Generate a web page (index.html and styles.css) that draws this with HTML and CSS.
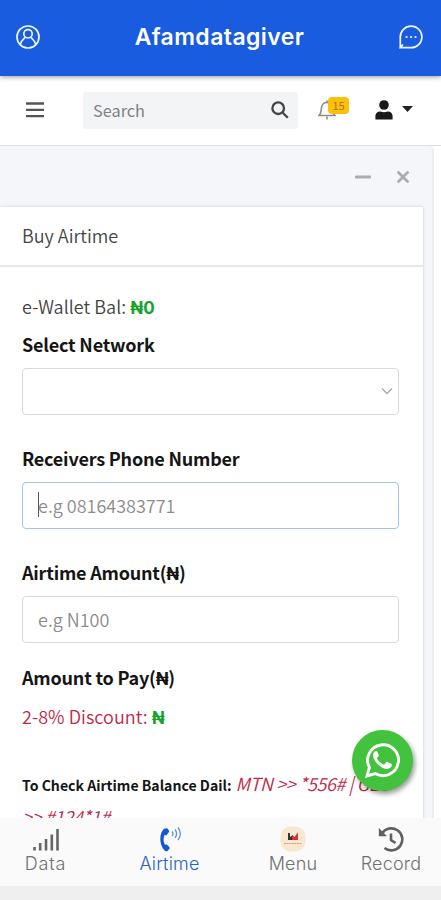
FILE: index.html
```html
<!DOCTYPE html>
<html lang="en">
<head>
<meta charset="utf-8">
<title>Afamdatagiver</title>
<link rel="stylesheet" href="styles.css">
</head>
<body>
<header class="appbar">
  <svg class="appbar-icon" viewBox="0 0 24 24"><circle cx="12" cy="12" r="11"/><circle cx="12" cy="8.8" r="4.2"/><path d="M4.5 19.5C5 15.6 7.6 14 9.2 12.5M14.8 12.5c1.6 1.5 4.2 3.1 4.700 7"/></svg>
  <h1 class="brand">Afamdatagiver</h1>
  <svg class="appbar-icon" viewBox="0 0 24 24"><path d="M1.300 22.700V12A10.800 10.800 0 1 1 12 22.700H1.300l2.600-3.200"/><path class="dots" d="M7.500 12h.1M12 12h.1M16.500 12h.1"/></svg>
</header>
<nav class="toolbar">
  <svg class="burger" viewBox="0 0 18 16"><path d="M0 1.500h18M0 7.800h18M0 14.200h18"/></svg>
  <div class="search"><span class="search-text">Search</span>
    <svg class="search-icon" viewBox="0 0 18 18"><circle cx="7.200" cy="7.200" r="5.800"/><path d="M11.500 11.500l5.300 5.300"/></svg>
  </div>
  <div class="bell">
    <svg viewBox="0 0 18 20"><path d="M1 15.500c2.500-2.300 2-5 2.500-8C4 4.500 6 2.500 9 2.500s5 2 5.500 5c.5 3 0 5.700 2.500 8z"/><path d="M9 .5v2M9 16.500v3"/></svg>
    <span class="count">15</span>
  </div>
  <svg class="user" viewBox="0 0 18 20"><circle cx="9" cy="5" r="4.800"/><path d="M.4 19.500v-3.300c0-3 2-4.700 4.800-4.700 2.600 1 5 1 7.600 0 2.800 0 4.800 1.700 4.800 4.700v3.300z"/></svg>
  <svg class="caret" viewBox="0 0 11 6"><path d="M0 0h11L5.500 6z"/></svg>
</nav>
<main class="page">
  <section class="panel">
    <div class="tools">
      <svg class="minus" viewBox="0 0 16 4"><path d="M1 2h14"/></svg>
      <svg class="close" viewBox="0 0 12 12"><path d="M1.500 1.500l9 9M10.500 1.500l-9 9"/></svg>
    </div>
    <div class="card">
      <h2 class="card-title">Buy Airtime</h2>
      <form class="form">
        <p class="balance">e-Wallet Bal: <b class="naira">₦0</b></p>
        <div class="label">Select Network</div>
        <div class="field select"><svg class="chevron" viewBox="0 0 12 8"><path d="M1 1.500l5 5 5-5"/></svg></div>
        <div class="label">Receivers Phone Number</div>
        <div class="field focused"><i class="cursor"></i><span class="hint">e.g 08164383771</span></div>
        <div class="label">Airtime Amount(<span class="sign">₦</span>)</div>
        <div class="field"><span class="hint">e.g N100</span></div>
        <div class="label pay">Amount to Pay(<span class="sign">₦</span>)</div>
        <p class="discount">2-8% Discount: <b class="naira">₦</b></p>
        <p class="check"><b>To Check Airtime Balance Dail:</b> <em>MTN &gt;&gt; *556# | GLO<br>&gt;&gt; #124*1#</em></p>
      </form>
    </div>
  </section>
</main>
<nav class="tabs">
  <div class="tab">
    <svg class="tab-icon" viewBox="0 0 26 26"><path class="bars" d="M1.500 24.500v-3.500M7.200 24.500v-7.500M13 24.500V13M18.800 24.500V8.500M24.500 24.500V3"/></svg>
    <span class="tab-text t-data">Data</span>
  </div>
  <div class="tab active">
    <svg class="tab-icon" viewBox="0 0 26 26"><path class="solid" d="M9.700 2.300L7 2.800C2 7 2 19 7.500 24.500c1 1 2.500 1 3.300.2l1.400-1.600c.7-.9.600-1.900-.3-2.700l-2-1.600c-.6-.5-1.200-.4-2-.1-1.700-3.200-1.700-6.500-.4-9.700 1 .3 1.700.3 2.300-.3l1.800-2.200c.6-.8.600-1.700 0-2.500-.4-.8-1-1.500-1.900-1.700z"/><path class="waves" d="M15 5.500q1.800 2.300 0 4.500M18 3.500q3.200 4.200 0 8.500M21 1.500q4.800 6.300 0 12.500"/></svg>
    <span class="tab-text t-air">Airtime</span>
  </div>
  <div class="tab">
    <svg class="tab-icon" viewBox="0 0 26 26"><rect x=".5" y=".5" width="25" height="25" rx="10" fill="#f7e8cf"/><path d="M8 7h2v4l3-2v5H8z" fill="#353238"/><path d="M12 14v-3l2-1v1.500l4-5V14z" fill="#d72d38"/><path d="M4 17.500h18" stroke="#e69b87" stroke-dasharray="2 .6"/></svg>
    <span class="tab-text">Menu</span>
  </div>
  <div class="tab">
    <svg class="tab-icon" viewBox="0 0 26 26"><path class="history" d="M4 7.500A11 11 0 1 1 6.500 22M13 7.500v6.500l4.500 3"/><path class="solid" d="M.8 2v8.200H9z"/></svg>
    <span class="tab-text">Record</span>
  </div>
</nav>
<div class="whatsapp">
  <svg viewBox="0 0 34 34"><path class="bubble" d="M2 32l2.300-8.200A15 15 0 1 1 10 29.700z"/><path class="phone" d="M12.300 8.800c-.5-1-1-1-1.600-1-1.600.3-3 2-2.900 4 .1 5.800 8 13.400 13.500 13.400 2.600 0 4.800-1.400 4.800-4 0-.5-.1-.8-.6-1l-3.600-1.800c-.6-.3-1-.2-1.400.3l-1.500 1.900c-.4.400-.7.400-1.200.2-2.800-1.300-4.700-3.100-6-5.500-.3-.5-.2-.8.200-1.200l1.200-1.500c.3-.4.200-.8 0-1.200z"/></svg>
</div>
</body>
</html>
```
FILE: styles.css
```css
* { box-sizing: border-box; }
body {
  margin: 0;
  width: 441px;
  height: 900px;
  overflow: hidden;
  position: relative;
  display: flex;
  flex-direction: column;
  background: #efefef;
  font-family: "Noto Sans CJK SC", "Noto Sans", sans-serif;
  font-size: 18px;
  font-weight: 350;
  color: #444;
}
svg { display: block; fill: none; stroke-linecap: butt; }
h1, h2, p { margin: 0; font-weight: inherit; }
span, b, .label { white-space: nowrap; }

.appbar {
  flex: none;
  height: 76px;
  padding: 0 18px 2px 16px;
  display: flex;
  align-items: center;
  justify-content: space-between;
  background: #195cdf;
  box-shadow: 0 1px 5px rgba(0, 0, 0, .4);
  z-index: 1;
}
.appbar-icon { width: 24px; height: 24px; stroke: #eef5ff; stroke-width: 1.7; }
.dots { stroke-width: 2.2; stroke-linecap: round; }
.brand {
  font: 600 23px/30px Inter, sans-serif;
  color: #fff;
  letter-spacing: .42px;
}

.toolbar {
  flex: none;
  height: 70px;
  padding: 0 29px 0 26px;
  display: flex;
  align-items: center;
  background: #fff;
  border-bottom: 1px solid #dee1e6;
}
.toolbar > * { flex: none; }
.burger { width: 18px; height: 16px; margin-top: -2px; stroke: #555; stroke-width: 2.3; }
.search {
  width: 215px;
  height: 37px;
  margin-left: 39px;
  padding: 0 9px 0 10px;
  display: flex;
  align-items: center;
  justify-content: space-between;
  background: #f3f4f6;
  border-radius: 3px;
}
.search-text { margin-top: -2px; font-size: 16.300px; font-weight: 400; line-height: 24px; color: #7e8287; }
.search-icon { width: 18px; height: 18px; margin-top: -2px; stroke: #444; stroke-width: 2.3; }
.bell { position: relative; margin: -2px 0 0 20px; width: 18px; height: 20px; }
.bell svg { width: 18px; height: 20px; stroke: #8c8c8c; stroke-width: 1.6; }
.count {
  position: absolute;
  left: 10px;
  top: -3px;
  width: 21px;
  height: 17px;
  border-radius: 4px;
  background: #fdc008;
  color: #9a7622;
  font-size: 11px;
  line-height: 16px;
  text-align: center;
}
.user { width: 18px; height: 20px; margin: -2px 0 0 39px; fill: #17191c; }
.caret { width: 11px; height: 6px; margin: 0 0 3px 9px; fill: #222; }

.page {
  flex: none;
  height: 672px;
  overflow: hidden;
  background: #fff;
}
.panel {
  width: 434px;
  height: 680px;
  padding-right: 11px;
  background: #f4f6fa;
  border-right: 2px solid #ebedf0;
  border-top-right-radius: 5px;
}
.tools {
  height: 61px;
  padding-right: 12px;
  display: flex;
  align-items: center;
  justify-content: flex-end;
  gap: 26px;
}
.tools svg { stroke: #a8adb4; stroke-width: 2.8; stroke-linecap: round; }
.minus { width: 16px; height: 4px; }
.close { width: 12px; height: 12px; }
.card {
  width: 423px;
  height: 620px;
  background: #fff;
  box-shadow: 0 0 3px rgba(0, 0, 0, .18);
}
.card-title {
  height: 60px;
  padding: 0 22px 2px;
  display: flex;
  align-items: center;
  border-bottom: 2px solid #e5e6e8;
  font-size: 18px;
  line-height: 24px;
}
.form { padding: 26px 24px 0 22px; }
.balance, .discount { height: 26px; line-height: 26px; font-size: 18px; letter-spacing: .05px; }
.naira {
  color: #16a32d;
  font-family: Inter, sans-serif;
  font-size: 17px;
  font-weight: 700;
}
.sign { font-family: Inter, sans-serif; font-size: 17px; }
.label {
  height: 26px;
  margin-top: 12px;
  line-height: 26px;
  font-size: 18px;
  font-weight: 700;
  letter-spacing: -.2px;
  color: #151515;
}
.field {
  height: 47px;
  margin: 11px 0 30px;
  padding: 0 15px 2px;
  display: flex;
  align-items: center;
  border: 1px solid #d9dadd;
  border-radius: 4px;
}
.field + .label { margin-top: 0; }
.select { justify-content: flex-end; padding-right: 5px; }
.chevron { width: 12px; height: 8px; stroke: #aaa; stroke-width: 1.4; }
.focused { border: 1.500px solid #9ec5ea; }
.cursor { width: 1px; height: 25px; margin-right: -1px; background: #555; }
.hint { color: #8c8c8c; font-size: 18px; line-height: 26px; }
.field + .pay { margin-top: -9px; }
.discount { margin-top: 13px; color: #c02844; }
.check { margin-top: 39px; font-size: 18px; line-height: 31px; white-space: nowrap; }
.check b { font-size: 14.080px; font-weight: 700; color: #151515; }
.check em { color: #c02844; letter-spacing: -.35px; }

.tabs {
  flex: none;
  height: 68px;
  padding: 8px 0 0;
  display: grid;
  grid-template-columns: 91px 157px 90px 106px;
  background: #fafafa;
  z-index: 1;
}
.tab {
  display: flex;
  flex-direction: column;
  align-items: center;
  color: #707070;
}
.tab-icon { width: 26px; height: 26px; }
.bars { stroke: #666; stroke-width: 2.6; }
.history { stroke: #606060; stroke-width: 2.6; }
.solid { fill: #606060; }
.active { color: #2863c4; }
.active .solid { fill: #1458cf; }
.waves { stroke: #5d91dc; stroke-width: 1.3; }
.tab-text { font: 300 18px/24px Inter, sans-serif; letter-spacing: .2px; }
.t-data { letter-spacing: .8px; }

.whatsapp {
  position: absolute;
  z-index: 2;
  left: 352px;
  top: 730px;
  width: 61px;
  height: 61px;
  border-radius: 50%;
  display: flex;
  align-items: center;
  justify-content: center;
  background: #43c23e;
  box-shadow: 2px 3px 5px rgba(0, 0, 0, .4);
}
.whatsapp svg { width: 35px; height: 35px; }
.bubble { stroke: #fff; stroke-width: 2.8; }
.phone { fill: #fff; }
```
